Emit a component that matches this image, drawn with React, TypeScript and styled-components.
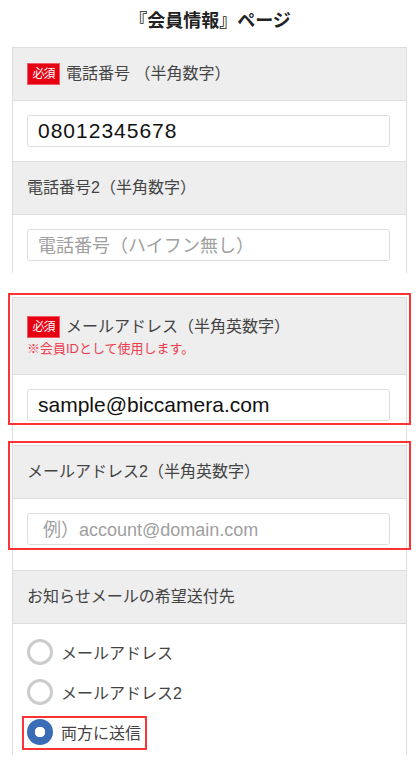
import React, { useState } from "react";
import styled, { createGlobalStyle, css } from "styled-components";

const GlobalStyle = createGlobalStyle`
  html, body {
    margin: 0;
    padding: 0;
    background: #fff;
  }
  body {
    font-family: "Liberation Sans", "Noto Sans CJK JP", sans-serif;
    color: #333;
  }
  * { box-sizing: border-box; }
`;

const Page = styled.div`
  width: 420px;
`;

const PageTitle = styled.h1`
  margin: 0;
  padding: 8px 0 12px;
  text-align: center;
  font-size: 18px;
  line-height: 27px;
  font-weight: 700;
  color: #222;
`;

const Panel = styled.div`
  margin: 0 13px 0 12px;
  border-left: 1px solid #ddd;
  border-right: 1px solid #ddd;

  & + & {
    margin-top: 24px;
  }
`;

const Section = styled.section<{ $marked?: boolean }>`
  position: relative;

  ${(p) =>
    p.$marked &&
    css`
      &::after {
        content: "";
        position: absolute;
        left: -5px;
        right: -5px;
        top: -4px;
        bottom: 20px;
        border: 2px solid #ff3333;
        pointer-events: none;
      }
    `}
`;

const Header = styled.div<{ $note?: boolean }>`
  background: #eeeeee;
  border-top: 1px solid #ddd;
  border-bottom: 1px solid #ddd;
  padding: ${(p) => (p.$note ? "17px 14px 15px" : "14px 14px")};
`;

const LabelRow = styled.div`
  display: flex;
  align-items: center;
  gap: 6px;
  font-size: 16px;
  line-height: 24px;
  color: #444;
`;

const Badge = styled.span`
  display: inline-flex;
  align-items: center;
  justify-content: center;
  width: 33px;
  height: 22px;
  background: #e60012;
  border: 1px solid #f25a66;
  color: #fff;
  font-size: 12px;
  letter-spacing: -1px;
`;

const Note = styled.div`
  font-size: 13px;
  line-height: 20px;
  color: #ec3d50;
`;

const Body = styled.div<{ $pb?: number }>`
  padding: 14px 16px ${(p) => p.$pb ?? 14}px 14px;
`;

const TextInput = styled.input<{ $spaced?: boolean }>`
  display: block;
  width: 100%;
  height: 32px;
  padding: 0 10px;
  border: 1px solid #dddddd;
  border-radius: 3px;
  background: #fff;
  font-family: "Liberation Sans", "Noto Sans CJK JP", sans-serif;
  font-size: 21px;
  letter-spacing: ${(p) => (p.$spaced ? "1px" : "0")};
  color: #111;
  outline: none;

  &::placeholder {
    color: #a0a0a0;
    font-size: 18px;
    letter-spacing: 0;
  }
`;

const RadioList = styled.div`
  display: flex;
  flex-direction: column;
  gap: 14px;
  padding: 15px 14px 10px;
`;

const RadioLabel = styled.label<{ $marked?: boolean }>`
  position: relative;
  display: inline-flex;
  align-self: flex-start;
  align-items: center;
  gap: 8px;
  height: 26px;
  font-size: 16px;
  color: #444;

  ${(p) =>
    p.$marked &&
    css`
      &::after {
        content: "";
        position: absolute;
        left: -5px;
        right: -6px;
        top: -3px;
        bottom: -5px;
        border: 2px solid #ff3333;
        pointer-events: none;
      }
    `}
`;

const Radio = styled.input`
  appearance: none;
  margin: 0;
  width: 26px;
  height: 26px;
  border-radius: 50%;
  border: 3px solid #cccccc;
  background: #fff;

  &:checked {
    border: none;
    background: radial-gradient(circle, #fff 0 5px, #3a6db6 5.5px);
  }
`;

const options = ["メールアドレス", "メールアドレス2", "両方に送信"];

export default function App() {
  const [choice, setChoice] = useState(2);

  return (
    <Page>
      <GlobalStyle />
      <PageTitle>『会員情報』ページ</PageTitle>

      <Panel>
        <Section>
          <Header>
            <LabelRow>
              <Badge>必須</Badge>
              電話番号 （半角数字）
            </LabelRow>
          </Header>
          <Body>
            <TextInput type="tel" defaultValue="08012345678" $spaced />
          </Body>
        </Section>
        <Section>
          <Header>
            <LabelRow>電話番号2（半角数字）</LabelRow>
          </Header>
          <Body $pb={12}>
            <TextInput type="tel" placeholder="電話番号（ハイフン無し）" />
          </Body>
        </Section>
      </Panel>

      <Panel>
        <Section $marked>
          <Header $note>
            <LabelRow>
              <Badge>必須</Badge>
              メールアドレス（半角英数字）
            </LabelRow>
            <Note>※会員IDとして使用します。</Note>
          </Header>
          <Body $pb={24}>
            <TextInput type="email" defaultValue="sample@biccamera.com" />
          </Body>
        </Section>
        <Section $marked>
          <Header>
            <LabelRow>メールアドレス2（半角英数字）</LabelRow>
          </Header>
          <Body $pb={25}>
            <TextInput type="email" placeholder=" 例）account@domain.com" />
          </Body>
        </Section>
        <Section>
          <Header>
            <LabelRow>お知らせメールの希望送付先</LabelRow>
          </Header>
          <RadioList>
            {options.map((label, i) => (
              <RadioLabel key={label} $marked={i === 2}>
                <Radio
                  type="radio"
                  name="notify"
                  checked={choice === i}
                  onChange={() => setChoice(i)}
                />
                {label}
              </RadioLabel>
            ))}
          </RadioList>
        </Section>
      </Panel>
    </Page>
  );
}
